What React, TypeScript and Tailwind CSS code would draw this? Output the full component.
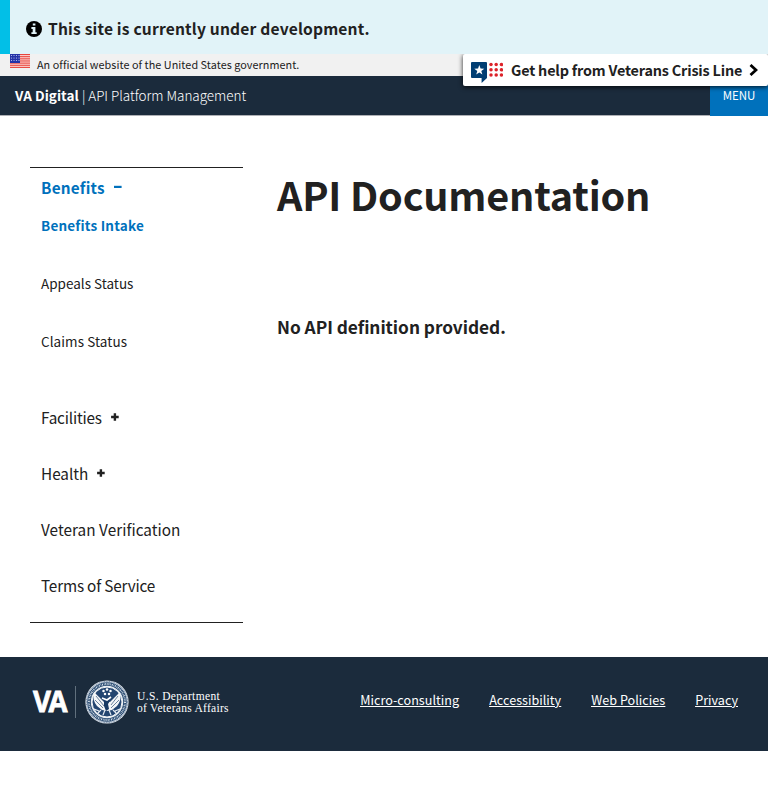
import React from 'react';

const font = "font-['Noto_Sans_CJK_SC','Noto_Sans',sans-serif]";

function InfoIcon() {
  return (
    <svg className="mt-[21px] h-4 w-4 shrink-0" viewBox="0 0 16 16">
      <circle cx="8" cy="8" r="8" fill="#000" />
      <path d="M6.8 2.4h2.6v2.2H6.8zM5.4 6h4v5.2h1.3v1.9H5.4v-1.9h1.3V7.9H5.4z" fill="#e1f3f8" />
    </svg>
  );
}

function Flag() {
  const stripes = [0, 1, 2, 3, 4, 5, 6];
  return (
    <svg className="h-[14px] w-5 shrink-0" viewBox="0 0 20 14">
      <rect width="20" height="14" fill="#fbd3d0" />
      {stripes.map((i) => (
        <rect key={i} y={i * 2.15} width="20" height="1.05" fill="#e8453c" />
      ))}
      <rect width="10" height="9" fill="#2433a8" />
      {[1.5, 4, 6.5, 9].map((x) =>
        [1.5, 4, 6.5].map((y) => <circle key={`${x}-${y}`} cx={x} cy={y} r=".6" fill="#c8cdf2" />),
      )}
    </svg>
  );
}

function CrisisIcon() {
  return (
    <svg className="mt-2 h-[21px] w-8 shrink-0" viewBox="0 0 32 21">
      <path d="M1 0h14q1 0 1 1v15L10.6 21V16H1q-1 0-1-1V1q0-1 1-1z" fill="#003e73" />
      <path d="M8.3 3l1.25 3.6 3.75.05-3 2.3 1.1 3.65-3.1-2.2-3.1 2.2 1.1-3.65-3-2.3 3.75-.05z" fill="#fff" />
      {[20, 25.2, 30.4].map((x) =>
        [2.6, 7.8, 13].map((y) => <circle key={`${x}-${y}`} cx={x} cy={y} r="1.75" fill="#dd2229" />),
      )}
    </svg>
  );
}

function Seal() {
  return (
    <svg className="h-11 w-11 shrink-0" viewBox="0 0 44 44" fill="none">
      <circle cx="22" cy="22" r="21.6" fill="#e8edf2" />
      <circle cx="22" cy="22" r="20.6" stroke="#294a73" strokeWidth=".7" strokeDasharray="1 .7" />
      <circle cx="22" cy="22" r="18" stroke="#274970" strokeWidth="3.6" />
      <circle cx="22" cy="22" r="18" stroke="#d3dde7" strokeWidth="2" strokeDasharray="1 .9 .6 .8" />
      <circle cx="22" cy="22" r="15" fill="#234570" stroke="#f3f6f8" strokeWidth="1" />
      <path d="M9 12q-2 8 3 14l5 4 5 1 5-1 5-4q5-6 3-14l-5 5-5 5-3-2-3 2-5-5z" fill="#f4f6f8" />
      <path d="M11 16l8 10M10 20l8 8M33 16l-7 9M34 20l-8 8" stroke="#315176" strokeWidth=".7" />
      <path d="M19 21l4-2 2 2-2 3 1 5-3 2-2-5z" fill="#183a64" />
      <path d="M16 30l-4 4m16-4l4 4M20 30l-2 5m6-5l2 5M14 31l-5-2m21 2l5-2" stroke="#e4eaf0" strokeWidth="1.2" />
      <path d="M17 18l5 2 4-3" stroke="#fff" strokeWidth="1.6" />
      {[[22, 9.5], [18.5, 11], [25.5, 11], [20, 14], [24, 14]].map(([x, y]) => (
        <circle key={`${x}-${y}`} cx={x} cy={y} r="1.25" fill="#fff" />
      ))}
    </svg>
  );
}

function Toggle({ open }: { open?: boolean }) {
  return (
    <svg className="h-2 w-2" viewBox="0 0 8 8">
      {open ? (
        <rect y="2.8" width="7.6" height="2.2" fill="#0071bc" />
      ) : (
        <path d="M2.7.2h2.4v2.6h2.6v2.4H5.1v2.6H2.7V5.2H.1V2.8h2.6z" fill="#212121" />
      )}
    </svg>
  );
}

export default function App() {
  return (
    <div className={`min-h-[800px] w-[768px] bg-white text-[#212121] ${font}`}>
      <section className="flex h-[54px] border-l-[10px] border-[#02bfe7] bg-[#e1f3f8] pl-4">
        <InfoIcon />
        <p className="ml-1.5 mt-4 text-[15.6px] font-bold leading-6 tracking-[0.18px] whitespace-nowrap">This site is currently under development.</p>
      </section>

      <div className="relative">
        <div className="flex h-[22px] bg-[#f1f1f1] pl-[10px]">
          <Flag />
          <p className="ml-[7px] text-[10.8px] leading-[21px] tracking-[0.06px] whitespace-nowrap">An official website of the United States government.</p>
        </div>
        <header className="flex h-10 justify-between border-b border-[#aeb0b5] bg-[#1b2b3c] pl-[15px] text-white">
          <p className="text-[13.5px] leading-[39px] whitespace-nowrap">
            <b className="tracking-[0.05px]">VA Digital</b> <span className="font-light tracking-[-0.03px]">| API Platform Management</span>
          </p>
          <button className="-mb-px h-10 w-[58px] bg-[#0071bc] pb-0.5 text-[11.5px] leading-[38px] font-normal">MENU</button>
        </header>
        <a className="absolute right-0 top-0 flex h-8 w-[305px] rounded-[2px] bg-white pl-2 shadow-[0_1px_5px_rgba(0,0,0,0.85)] [clip-path:inset(0_0_-8px_-8px)]">
          <CrisisIcon />
          <span className="ml-2 w-[231px] text-[14.4px] font-bold leading-8 tracking-[-0.18px] whitespace-nowrap">Get help from Veterans Crisis Line</span>
          <svg className="ml-[7px] mt-[10px] h-3 w-[9px]" viewBox="0 0 9 12">
            <path d="M1.5 1L7 6 1.5 11" fill="none" stroke="#000" strokeWidth="2.8" />
          </svg>
        </a>
      </div>

      <main className="flex h-[541px] pl-[30px] pt-[51px]">
        <nav className="h-[456px] w-[213px] border-y border-[#212121] pl-[11px]">
          <div className="flex h-[38px] items-center gap-[9px] text-[#0071bc]">
            <span className="text-[15.3px] font-bold leading-[38px] tracking-[0.22px]">Benefits</span>
            <Toggle open />
          </div>
          <div className="pt-px text-[13.5px]">
            <p className="h-[58px] font-bold leading-9 tracking-[0.2px] text-[#0071bc]">Benefits Intake</p>
            <p className="h-[58px] leading-9">Appeals Status</p>
            <p className="h-[66px] leading-9 tracking-[0.08px]">Claims Status</p>
          </div>
          <div className="text-[15.3px] leading-[56px]">
            <div className="flex h-14 items-center gap-[9px]"><span className="tracking-[-0.18px]">Facilities</span><Toggle /></div>
            <div className="flex h-14 items-center gap-[9px]"><span>Health</span><Toggle /></div>
            <p className="tracking-[0.04px]">Veteran Verification</p>
            <p className="tracking-[-0.18px]">Terms of Service</p>
          </div>
        </nav>
        <article className="ml-[34px]">
          <h1 className="text-[39.6px] font-bold leading-[54px] tracking-[-0.2px] whitespace-nowrap">API Documentation</h1>
          <h3 className="mt-[92px] text-[17.3px] font-bold leading-7 tracking-[-0.03px] whitespace-nowrap">No API definition provided.</h3>
        </article>
      </main>

      <footer className="flex h-[94px] justify-between bg-[#1b2b3c] pl-[33px] pr-[30px] text-white">
        <div className="flex pt-[23px]">
          <svg className="h-11 w-[35px] overflow-visible" viewBox="0 0 35 44">
            <text x="0" y="32" transform="scale(.95 1)" fill="#fff" stroke="#fff" strokeWidth=".8" className="text-[29px] font-bold tracking-[-2.6px] font-['Open_Sans',sans-serif]">VA</text>
          </svg>
          <i className="ml-[7px] mt-1.5 h-8 w-px bg-[#61707d]" />
          <div className="ml-[9px]"><Seal /></div>
          <div className="ml-2 mt-[10px] font-['Liberation_Serif',serif] text-[11.5px] leading-[12px] whitespace-nowrap">
            <p className="tracking-[0.37px]">U.S. Department</p>
            <p className="tracking-[0.28px]">of Veterans Affairs</p>
          </div>
        </div>
        <div className="flex gap-[30px] pt-[33px] text-[12.6px] leading-[20px] underline underline-offset-1 whitespace-nowrap">
          <a className="tracking-[0.03px]">Micro-consulting</a>
          <a className="tracking-[0.02px]">Accessibility</a>
          <a className="tracking-[0.03px]">Web Policies</a>
          <a>Privacy</a>
        </div>
      </footer>
    </div>
  );
}
